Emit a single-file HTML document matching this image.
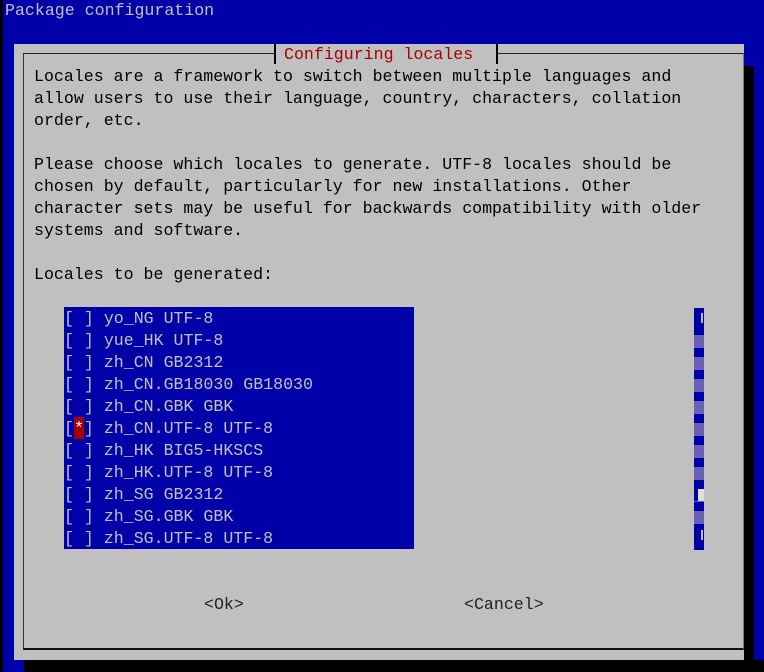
<!DOCTYPE html>
<html><head><meta charset="utf-8"><style>
html,body{margin:0;padding:0;}
body{width:764px;height:672px;background:#0000a8;position:relative;overflow:hidden;font-family:"Liberation Mono","Noto Sans CJK SC",monospace;font-size:16.6px;}
.a{position:absolute;}
.t{position:absolute;white-space:pre;line-height:22px;height:22px;}
</style></head><body>
<div class="a" style="left:0;top:0;width:3px;height:672px;background:#000"></div>
<div class="t" style="left:5px;top:0px;color:#c0c0c0">Package configuration</div>
<!-- shadow -->
<div class="a" style="left:744px;top:66px;width:10px;height:606px;background:#000"></div>
<div class="a" style="left:24px;top:660px;width:740px;height:12px;background:#000"></div>
<!-- dialog -->
<div class="a" style="left:14px;top:44px;width:730px;height:616px;background:#c0c0c0"></div>
<div class="a" style="left:23px;top:53px;width:719px;height:594px;border-top:1px solid #222;border-left:1px solid #333;border-bottom:2px solid #111;border-right:1px solid #8a7a5a"></div>
<div class="a" style="left:274px;top:44px;width:220px;height:20px;background:#c0c0c0;border-left:2px solid #000;border-right:2px solid #000"></div>
<div class="t" style="left:284px;top:44px;color:#a80000">Configuring locales</div>
<div class="t" style="left:34px;top:66px;color:#000">Locales are a framework to switch between multiple languages and
allow users to use their language, country, characters, collation
order, etc.

Please choose which locales to generate. UTF-8 locales should be
chosen by default, particularly for new installations. Other
character sets may be useful for backwards compatibility with older
systems and software.

Locales to be generated:</div>
<!-- list -->
<div class="a" style="left:64px;top:307px;width:350px;height:242px;background:#0000a8"></div>
<div class="t" style="left:64px;top:308px;height:242px;color:#c0c0c0">[ ] yo_NG UTF-8
[ ] yue_HK UTF-8
[ ] zh_CN GB2312
[ ] zh_CN.GB18030 GB18030
[ ] zh_CN.GBK GBK
[ ] zh_CN.UTF-8 UTF-8
[ ] zh_HK BIG5-HKSCS
[ ] zh_HK.UTF-8 UTF-8
[ ] zh_SG GB2312
[ ] zh_SG.GBK GBK
[ ] zh_SG.UTF-8 UTF-8</div>
<div class="a" style="left:74px;top:417px;width:10px;height:22px;background:#a80000"></div>
<div class="t" style="left:74px;top:418px;color:#fff">*</div>
<!-- scrollbar -->
<div class="a" style="left:694px;top:308px;width:10px;height:242px;background:repeating-linear-gradient(to bottom,#0000a8 0,#0000a8 5px,#6a60b8 5px,#6a60b8 18px,#0000a8 18px,#0000a8 22px);"></div>
<div class="a" style="left:694px;top:308px;width:10px;height:27px;background:#0000a8"></div>
<div class="a" style="left:694px;top:489px;width:10px;height:12px;background:#0000a8"></div>
<div class="a" style="left:698px;top:489px;width:6px;height:12px;background:#e0e0e0"></div>
<div class="a" style="left:694px;top:524px;width:10px;height:26px;background:#0000a8"></div>
<div class="a" style="left:701px;top:313px;width:2px;height:10px;background:#c0c0c0"></div>
<div class="a" style="left:701px;top:530px;width:2px;height:10px;background:#c0c0c0"></div>
<!-- buttons -->
<div class="t" style="left:204px;top:594px;color:#222">&lt;Ok&gt;</div>
<div class="t" style="left:464px;top:594px;color:#222">&lt;Cancel&gt;</div>
</body></html>
